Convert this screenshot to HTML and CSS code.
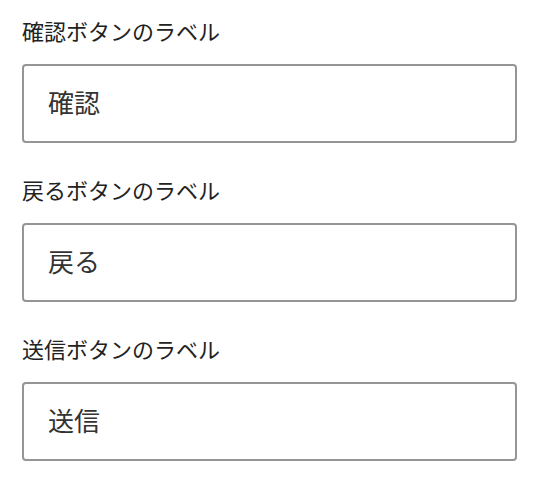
FILE: index.html
```html
<!DOCTYPE html>
<html lang="ja">

<head>
    <meta charset="UTF-8">
    <meta name="viewport" content="width=device-width, initial-scale=1.0">
    <title>ボタンのラベル</title>
    <link rel="stylesheet" href="styles.css">
</head>

<body>

    <form class="label-form">
        <div class="form-group">
            <label for="confirm_label">確認ボタンのラベル</label>
            <input type="text" id="confirm_label" value="確認">
        </div>
        <div class="form-group">
            <label for="back_label">戻るボタンのラベル</label>
            <input type="text" id="back_label" value="戻る">
        </div>
        <div class="form-group">
            <label for="submit_label">送信ボタンのラベル</label>
            <input type="text" id="submit_label" value="送信">
        </div>
    </form>

</body>

</html>
```

FILE: styles.css
```css
body {
    font-family: "Noto Sans CJK JP", "Noto Sans", sans-serif;
    background-color: #fff;
    color: #222;
    margin: 0;
    padding: 0;
}

.label-form {
    padding: 14px 17px 0 22px;
}

.form-group {
    margin-bottom: 30px;
}

.form-group label {
    display: block;
    font-size: 22px;
    line-height: 32px;
    margin-bottom: 18px;
}

.form-group input {
    display: block;
    width: 100%;
    height: 79px;
    padding: 0 24px 4px;
    border: 2px solid #959595;
    border-radius: 4px;
    box-sizing: border-box;
    font-family: inherit;
    font-size: 26px;
    color: #333;
    background-color: #fff;
    outline: none;
}
```
